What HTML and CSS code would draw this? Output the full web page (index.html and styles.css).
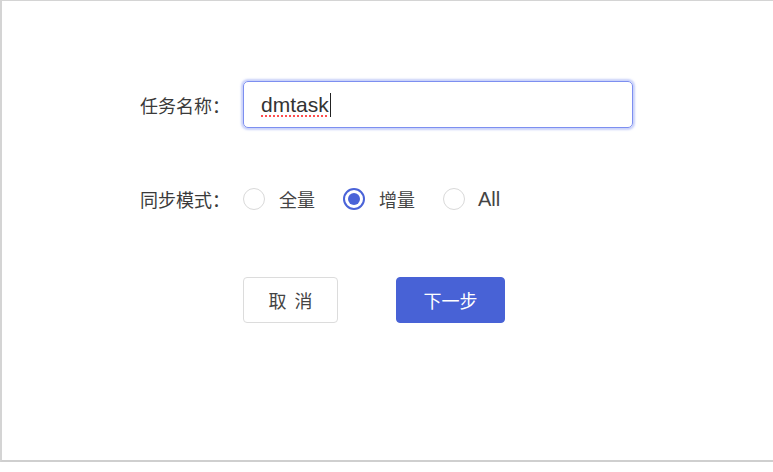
FILE: index.html
```html
<!DOCTYPE html>
<html lang="zh-CN">
<head>
<meta charset="utf-8">
<title>任务</title>
<link rel="stylesheet" href="styles.css">
</head>
<body>
<div class="frame">
  <form class="form">
    <div class="row row-name">
      <label class="label">任务名称：</label>
      <div class="input"><span class="value">dmtask</span><span class="caret"></span></div>
    </div>
    <div class="row row-mode">
      <label class="label">同步模式：</label>
      <div class="radios">
        <span class="radio"><span class="circle"></span><span class="rtext">全量</span></span>
        <span class="radio checked"><span class="circle"></span><span class="rtext">增量</span></span>
        <span class="radio"><span class="circle"></span><span class="rtext latin">All</span></span>
      </div>
    </div>
    <div class="row row-actions">
      <button type="button" class="btn btn-default">取 消</button>
      <button type="button" class="btn btn-primary">下一步</button>
    </div>
  </form>
</div>
</body>
</html>
```
FILE: styles.css
```css
html, body {
  margin: 0;
  padding: 0;
  background: #fff;
}
body {
  font-family: "Noto Sans CJK SC", "Noto Sans", sans-serif;
  color: #333;
}
.frame {
  box-sizing: border-box;
  width: 773px;
  height: 462px;
  border-top: 1px solid #d4d4d4;
  border-left: 2px solid #d4d4d4;
  border-bottom: 2px solid #cfcfcf;
  padding-top: 80px;
  padding-left: 138px;
}
.form {
  display: flex;
  flex-direction: column;
}
.row {
  display: flex;
  align-items: center;
}
.label {
  width: 103px;
  font-size: 18px;
  color: #3a3a3a;
  white-space: nowrap;
}
.input {
  box-sizing: border-box;
  width: 390px;
  height: 47px;
  border: 1.5px solid #7d8ff0;
  border-radius: 5px;
  box-shadow: 0 0 2px 2px rgba(120, 140, 240, 0.4);
  display: flex;
  align-items: center;
  padding-left: 17px;
  font-family: "Liberation Sans", "Noto Sans", sans-serif;
  font-size: 21px;
  color: #333;
}
.value {
  text-decoration: underline dotted #ff4d4d;
  text-decoration-thickness: 2px;
  text-underline-offset: 4px;
}
.caret {
  width: 1px;
  height: 24px;
  background: #222;
  margin-left: 1px;
}
.row-mode {
  margin-top: 58px;
}
.radios {
  display: flex;
  align-items: center;
}
.radio {
  display: flex;
  align-items: center;
  width: 100px;
}
.circle {
  box-sizing: border-box;
  flex: none;
  width: 22px;
  height: 22px;
  border-radius: 50%;
  border: 1px solid #d9d9d9;
  background: #fff;
  position: relative;
}
.checked .circle {
  border: 2px solid #4a63d8;
}
.checked .circle::after {
  content: "";
  position: absolute;
  left: 3px;
  top: 3px;
  width: 12px;
  height: 12px;
  border-radius: 50%;
  background: #4a63d8;
}
.rtext {
  margin-left: 14px;
  font-size: 18px;
  color: #444;
}
.rtext.latin {
  margin-left: 13px;
  font-family: "Liberation Sans", sans-serif;
  font-size: 20px;
}
.row-actions {
  margin-top: 65px;
  padding-left: 103px;
}
.btn {
  box-sizing: border-box;
  height: 46px;
  border-radius: 4px;
  font-family: "Noto Sans CJK SC", sans-serif;
  font-size: 18px;
  cursor: pointer;
}
.btn-default {
  width: 95px;
  background: #fff;
  border: 1px solid #dcdcdc;
  color: #444;
  letter-spacing: 2px;
  text-indent: 2px;
}
.btn-primary {
  width: 109px;
  margin-left: 58px;
  background: #4862d6;
  border: 1px solid #4862d6;
  color: #fff;
}
```
